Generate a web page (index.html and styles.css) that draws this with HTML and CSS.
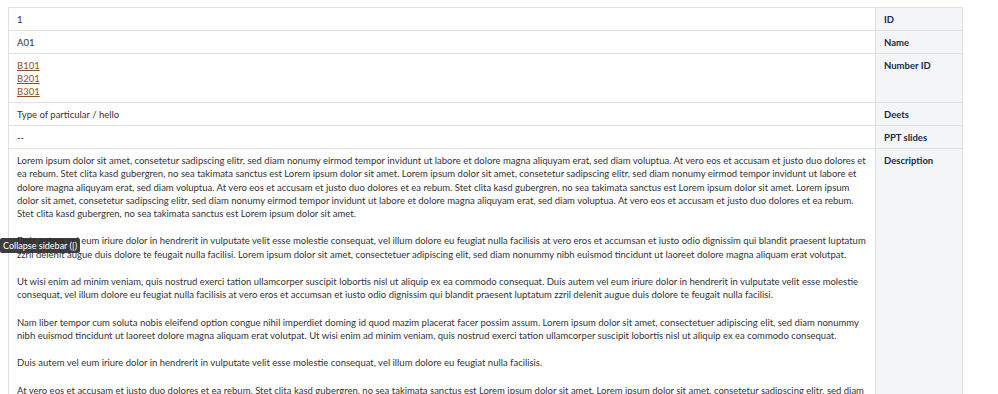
FILE: index.html
```html
<!DOCTYPE html>
<html lang="en">
<head>
    <meta charset="UTF-8">
    <meta name="viewport" content="width=device-width, initial-scale=1.0">
    <title>Record details</title>
    <link rel="stylesheet" href="styles.css">
</head>
<body>
    <table class="details">
        <tr>
            <td class="value">1</td>
            <th class="label">ID</th>
        </tr>
        <tr>
            <td class="value">A01</td>
            <th class="label">Name</th>
        </tr>
        <tr>
            <td class="value">
                <a href="#">B101</a><br>
                <a href="#">B201</a><br>
                <a href="#">B301</a>
            </td>
            <th class="label">Number ID</th>
        </tr>
        <tr>
            <td class="value">Type of particular / hello</td>
            <th class="label">Deets</th>
        </tr>
        <tr>
            <td class="value">--</td>
            <th class="label">PPT slides</th>
        </tr>
        <tr>
            <td class="value description">
                <p>Lorem ipsum dolor sit amet, consetetur sadipscing elitr, sed diam nonumy eirmod tempor invidunt ut labore et dolore magna aliquyam erat, sed diam voluptua. At vero eos et accusam et justo duo dolores et ea rebum. Stet clita kasd gubergren, no sea takimata sanctus est Lorem ipsum dolor sit amet. Lorem ipsum dolor sit amet, consetetur sadipscing elitr, sed diam nonumy eirmod tempor invidunt ut labore et dolore magna aliquyam erat, sed diam voluptua. At vero eos et accusam et justo duo dolores et ea rebum. Stet clita kasd gubergren, no sea takimata sanctus est Lorem ipsum dolor sit amet. Lorem ipsum dolor sit amet, consetetur sadipscing elitr, sed diam nonumy eirmod tempor invidunt ut labore et dolore magna aliquyam erat, sed diam voluptua. At vero eos et accusam et justo duo dolores et ea rebum. Stet clita kasd gubergren, no sea takimata sanctus est Lorem ipsum dolor sit amet.</p>
                <p>Duis autem vel eum iriure dolor in hendrerit in vulputate velit esse molestie consequat, vel illum dolore eu feugiat nulla facilisis at vero eros et accumsan et iusto odio dignissim qui blandit praesent luptatum zzril delenit augue duis dolore te feugait nulla facilisi. Lorem ipsum dolor sit amet, consectetuer adipiscing elit, sed diam nonummy nibh euismod tincidunt ut laoreet dolore magna aliquam erat volutpat.</p>
                <p>Ut wisi enim ad minim veniam, quis nostrud exerci tation ullamcorper suscipit lobortis nisl ut aliquip ex ea commodo consequat. Duis autem vel eum iriure dolor in hendrerit in vulputate velit esse molestie consequat, vel illum dolore eu feugiat nulla facilisis at vero eros et accumsan et iusto odio dignissim qui blandit praesent luptatum zzril delenit augue duis dolore te feugait nulla facilisi.</p>
                <p>Nam liber tempor cum soluta nobis eleifend option congue nihil imperdiet doming id quod mazim placerat facer possim assum. Lorem ipsum dolor sit amet, consectetuer adipiscing elit, sed diam nonummy nibh euismod tincidunt ut laoreet dolore magna aliquam erat volutpat. Ut wisi enim ad minim veniam, quis nostrud exerci tation ullamcorper suscipit lobortis nisl ut aliquip ex ea commodo consequat.</p>
                <p>Duis autem vel eum iriure dolor in hendrerit in vulputate velit esse molestie consequat, vel illum dolore eu feugiat nulla facilisis.</p>
                <p>At vero eos et accusam et justo duo dolores et ea rebum. Stet clita kasd gubergren, no sea takimata sanctus est Lorem ipsum dolor sit amet. Lorem ipsum dolor sit amet, consetetur sadipscing elitr, sed diam nonumy eirmod tempor invidunt ut labore et dolore magna aliquyam erat, sed diam voluptua. At vero eos et accusam et justo duo dolores et ea rebum. Stet clita kasd gubergren, no sea takimata sanctus est Lorem ipsum dolor sit amet.</p>
            </td>
            <th class="label">Description</th>
        </tr>
    </table>
    <div class="tooltip">Collapse sidebar ([)</div>
</body>
</html>
```
FILE: styles.css
```css
body {
    font-family: 'Lato', sans-serif;
    font-size: 9.5px;
    color: #333;
    margin: 7px 8px;
    background-color: #fff;
}
.details {
    border-collapse: collapse;
    table-layout: fixed;
    width: 955px;
}
.details td,
.details th {
    border: 1px solid #dfe1e6;
    padding: 5px 8px 4px 8px;
    line-height: 13px;
    vertical-align: top;
    text-align: left;
}
.value {
    background-color: #fff;
}
.label {
    width: 70px;
    background-color: #f4f5f7;
    color: #172b4d;
    font-weight: bold;
}
.value a {
    color: #8f4f22;
    text-decoration: underline;
}
.description p {
    margin: 0 0 14px 0;
    line-height: 13.3px;
}
.tooltip {
    position: absolute;
    left: 0;
    top: 238px;
    height: 15px;
    line-height: 15px;
    padding: 0 3px;
    background-color: rgba(40, 40, 40, 0.9);
    color: #fff;
    font-size: 9px;
    border-radius: 2px;
}
```
